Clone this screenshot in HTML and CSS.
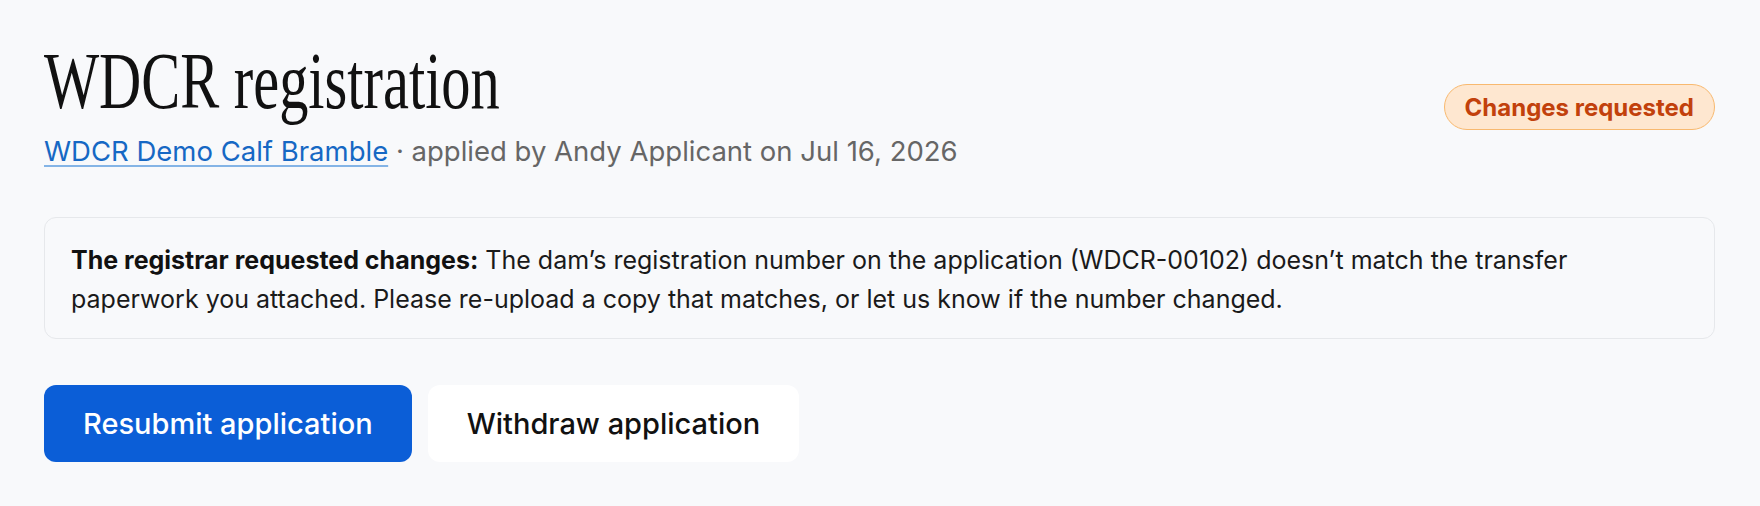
FILE: index.html
```html
<!DOCTYPE html>
<html lang="en">
  <head>
    <meta charset="UTF-8" />
    <meta name="viewport" content="width=device-width, initial-scale=1.0" />
    <title>WDCR registration</title>
    <link rel="stylesheet" href="styles.css">
  </head>
  <body>
    <div class="page">
      <div class="header">
        <div class="heading">
          <h1 class="title"><span>WDCR registration</span></h1>
          <p class="meta">
            <a href="#" class="animal-link">WDCR Demo Calf Bramble</a> · applied by Andy Applicant on Jul 16, 2026
          </p>
        </div>
        <span class="badge">Changes requested</span>
      </div>

      <div class="notice">
        <p><strong>The registrar requested changes:</strong> The dam’s registration number on the application (WDCR-00102) doesn’t match the transfer paperwork you attached. Please re-upload a copy that matches, or let us know if the number changed.</p>
      </div>

      <div class="actions">
        <button class="btn btn-primary">Resubmit application</button>
        <button class="btn btn-plain">Withdraw application</button>
      </div>
    </div>
  </body>
</html>
```

FILE: styles.css
```css
body {
  margin: 0;
  background: #f8f9fb;
  font-family: Inter, "Noto Sans", sans-serif;
  color: #111;
}
.page {
  padding: 41px 45px 0 44px;
}
.header {
  display: flex;
  justify-content: space-between;
  align-items: center;
}
.title {
  margin: 0;
  font-family: "Liberation Serif", serif;
  font-weight: 400;
  font-size: 80px;
  line-height: 80px;
  color: #111;
}
.title span {
  display: inline-block;
  transform: scaleX(0.73);
  transform-origin: left center;
}
.meta {
  margin: 12px 0 0;
  font-size: 27.5px;
  line-height: 36px;
  color: #666;
}
.animal-link {
  color: #1668c4;
  text-decoration: underline;
  text-decoration-color: #84b4e6;
  text-decoration-thickness: 2px;
  text-underline-offset: 4px;
}
.badge {
  display: inline-flex;
  align-items: center;
  height: 44px;
  padding: 0 20px;
  border: 1.5px solid #f8b96f;
  border-radius: 999px;
  background: #fee7d0;
  color: #c2410c;
  font-weight: 700;
  font-size: 24px;
  margin-top: 4px;
}
.notice {
  margin-top: 48px;
  border: 1px solid #e6e8eb;
  border-radius: 12px;
  padding: 23px 26px 19px;
}
.notice p {
  margin: 0;
  max-width: 1560px;
  font-size: 25px;
  line-height: 39px;
  color: #1a1a1a;
}
.notice strong {
  font-weight: 700;
  color: #111;
}
.actions {
  display: flex;
  gap: 16px;
  margin-top: 46px;
}
.btn {
  display: inline-flex;
  align-items: center;
  height: 77px;
  padding: 0 39px;
  border: none;
  border-radius: 12px;
  font-family: Inter, "Noto Sans", sans-serif;
  font-size: 29px;
  font-weight: 500;
}
.btn-primary {
  background: #0b5ed7;
  color: #fff;
}
.btn-plain {
  background: #fff;
  color: #111;
}
```
